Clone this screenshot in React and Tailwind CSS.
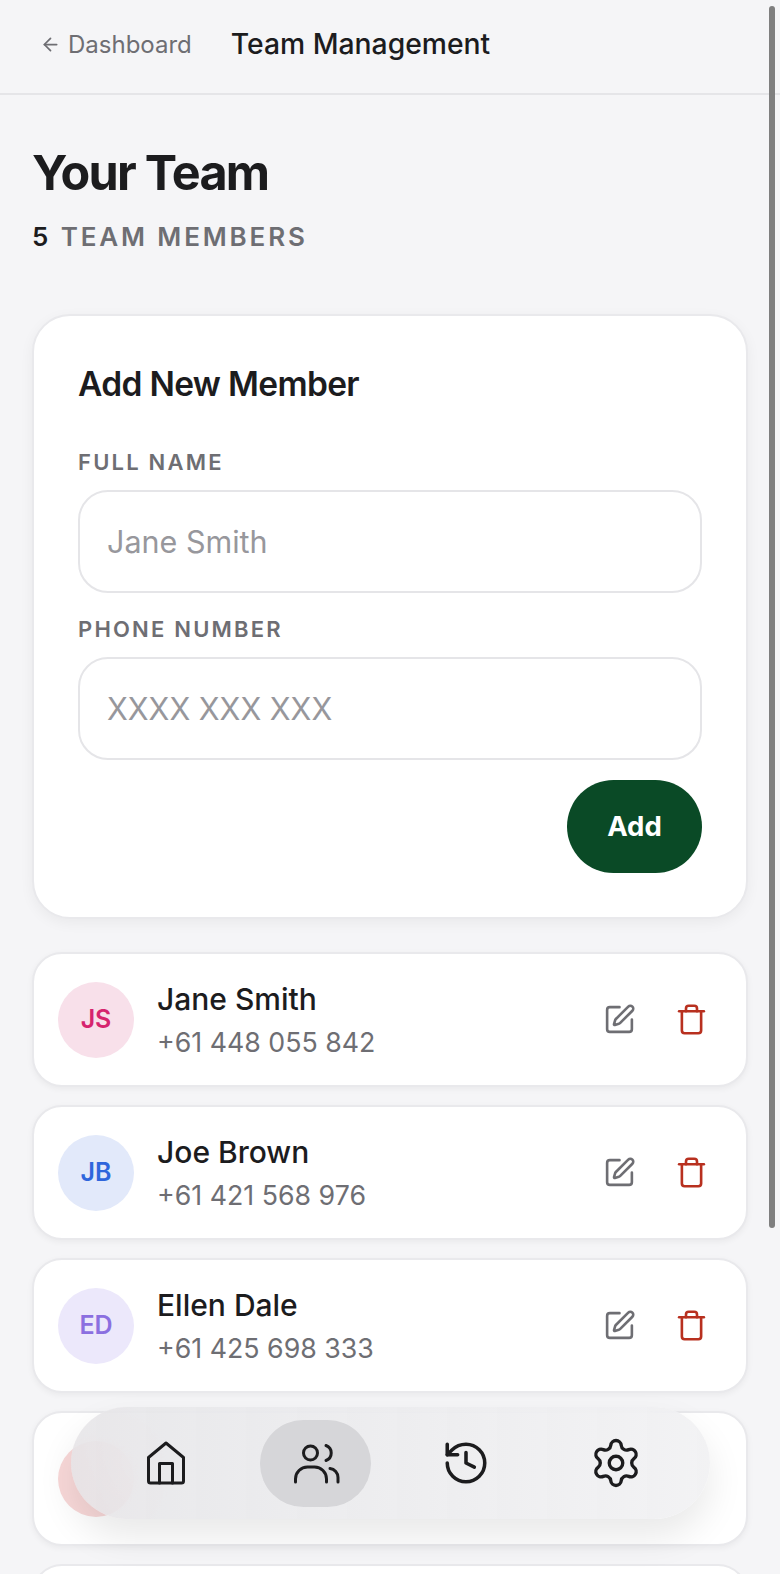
import { ArrowLeft, History, Settings, SquarePen, Trash } from "lucide-react"

const members = [
  { initials: "JS", name: "Jane Smith", phone: "+61 448 055 842", bg: "bg-[#f8e0ea]", color: "text-[#d6246e]" },
  { initials: "JB", name: "Joe Brown", phone: "+61 421 568 976", bg: "bg-[#e2e9fa]", color: "text-[#2f66dc]" },
  { initials: "ED", name: "Ellen Dale", phone: "+61 425 698 333", bg: "bg-[#ece8fb]", color: "text-[#8b6fe0]" },
]

function HomeIcon() {
  return (
    <svg width="48" height="48" viewBox="0 0 48 48" fill="none" stroke="#1c1c1e" strokeWidth="3" strokeLinejoin="round" strokeLinecap="round">
      <path d="M24 4 6.5 18.5V42a2 2 0 0 0 2 2h31a2 2 0 0 0 2-2V18.5Z" />
      <path d="M17.5 44V24.5h13V44" />
    </svg>
  )
}

function TeamIcon() {
  return (
    <svg width="48" height="48" viewBox="0 0 48 48" fill="none" stroke="#1c1c1e" strokeWidth="3" strokeLinecap="round">
      <circle cx="18.5" cy="14" r="7" />
      <path d="M34 6.5a8 8 0 0 1 0 15" />
      <path d="M3.5 43v-3a12 12 0 0 1 12-12h7a12 12 0 0 1 12 12v3" />
      <path d="M38 29.5a9 9 0 0 1 8 9V43" />
    </svg>
  )
}

function MemberRow({ member }) {
  return (
    <div className="flex h-[135px] shrink-0 items-center rounded-[30px] border-2 border-[#e9e9ec] bg-white pl-[24px] pr-[38px] shadow-[0_2px_6px_rgba(0,0,0,0.05)]">
      <div className={`flex h-[76px] w-[76px] items-center justify-center rounded-full text-[25px] font-semibold ${member.bg} ${member.color}`}>
        {member.initials}
      </div>
      <div className="ml-[23px] flex-1">
        <div className="text-[30px] leading-[40px] font-medium text-[#1c1c1e]">{member.name}</div>
        <div className="mt-[4px] text-[26.75px] leading-[38px] text-[#6e6e73]">{member.phone}</div>
      </div>
      <SquarePen size={33} strokeWidth={1.9} className="text-[#6e6e73]" />
      <Trash size={33} strokeWidth={1.9} className="ml-[39px] text-[#b8301f]" />
    </div>
  )
}

function Field({ label, placeholder }) {
  return (
    <div>
      <div className="text-[22px] leading-[28px] font-semibold tracking-[0.1em] text-[#6e6e73]">{label}</div>
      <input
        placeholder={placeholder}
        className="mt-[14px] h-[103px] w-full rounded-[30px] border-2 border-[#e5e5e8] bg-white px-[27px] text-[30.5px] placeholder:text-[#97979c]"
      />
    </div>
  )
}

function BottomNav() {
  return (
    <div className="absolute left-[71px] top-[1407px] flex h-[112px] w-[639px] items-center justify-center gap-[39px] rounded-full bg-gradient-to-r from-[#e3e3e6]/80 to-[#f0f0f2]/85 shadow-[0_18px_36px_rgba(0,0,0,0.09)] backdrop-blur-2xl">
      <div className="flex h-[87px] w-[111px] items-center justify-center"><HomeIcon /></div>
      <div className="flex h-[87px] w-[111px] items-center justify-center rounded-full bg-[#d6d6d9]"><TeamIcon /></div>
      <div className="flex h-[87px] w-[111px] items-center justify-center"><History size={50} strokeWidth={1.7} className="text-[#1c1c1e]" /></div>
      <div className="flex h-[87px] w-[111px] items-center justify-center"><Settings size={54} strokeWidth={1.5} className="text-[#1c1c1e]" /></div>
    </div>
  )
}

export default function App() {
  return (
    <div className="relative h-[1574px] w-[780px] overflow-hidden bg-[#f5f5f7] font-['Inter',sans-serif]">
      <div className="flex h-[95px] items-center border-b-2 border-[#e5e5e8] pl-[40px] pb-[4px]">
        <ArrowLeft size={21} className="text-[#6e6e73]" />
        <span className="ml-[7px] text-[24px] text-[#6e6e73]">Dashboard</span>
        <span className="ml-[39px] text-[28.3px] font-medium text-[#1c1c1e]">Team Management</span>
      </div>

      <div className="px-[32px]">
        <h1 className="mt-[48px] text-[48.5px] leading-[60px] font-bold tracking-[-0.035em] text-[#1c1c1e]">Your Team</h1>
        <div className="mt-[18px] text-[26px] leading-[32px] font-semibold tracking-[0.11em] text-[#6e6e73]">
          <span className="text-[#1c1c1e]">5</span> TEAM MEMBERS
        </div>

        <div className="mt-[61px] rounded-[38px] border-2 border-[#e9e9ec] bg-white px-[44px] pt-[47px] pb-[44px] shadow-[0_4px_14px_rgba(0,0,0,0.05)]">
          <h2 className="text-[33.5px] leading-[42px] font-semibold tracking-[-0.02em] text-[#1c1c1e]">Add New Member</h2>
          <div className="mt-[43px] flex flex-col gap-[22px]">
            <Field label="FULL NAME" placeholder="Jane Smith" />
            <Field label="PHONE NUMBER" placeholder="XXXX XXX XXX" />
          </div>
          <div className="mt-[20px] flex justify-end">
            <button className="h-[93px] w-[135px] rounded-full bg-[#0a4a26] text-[27.5px] font-bold text-white">Add</button>
          </div>
        </div>

        <div className="mt-[33px] flex flex-col gap-[18px]">
          {members.map((member) => (
            <MemberRow key={member.name} member={member} />
          ))}
          <div className="flex h-[135px] shrink-0 items-center rounded-[30px] border-2 border-[#e9e9ec] bg-white pl-[24px] shadow-[0_2px_6px_rgba(0,0,0,0.05)]">
            <div className="h-[76px] w-[76px] rounded-full bg-[#f8d8d8]" />
          </div>
          <div className="h-[135px] shrink-0 rounded-[30px] border-2 border-[#e9e9ec] bg-white" />
        </div>
      </div>

      <BottomNav />
      <div className="absolute right-[5px] top-[6px] h-[1222px] w-[6px] rounded-full bg-[#7f7f7f]" />
    </div>
  )
}
